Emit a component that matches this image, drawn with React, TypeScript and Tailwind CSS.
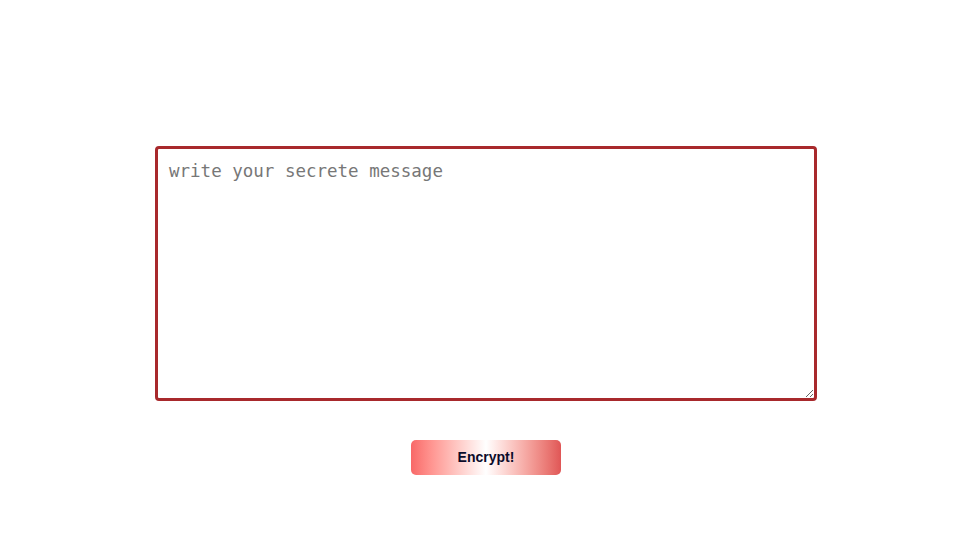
import React, { useState } from 'react';

const App: React.FC = () => {
  const [message, setMessage] = useState('');

  return (
    <div className="min-h-screen w-full bg-white flex flex-col items-center pt-[146px] pl-[19px]">
      {/* Message box */}
      <textarea
        value={message}
        onChange={(e) => setMessage(e.target.value)}
        placeholder="write your secrete message"
        className="w-[662px] h-[255px] border-[3px] border-[#a8292c] rounded-[4px] pl-[11px] pr-[10px] py-[10px] text-[17.5px] leading-[24px] text-gray-800 placeholder:text-[#777] outline-none resize font-['DejaVu_Sans_Mono','Liberation_Mono',monospace]"
      />

      {/* Action */}
      <button
        type="button"
        className="mt-[39px] w-[150px] h-[35px] rounded-[5px] bg-linear-to-r from-[#f86868] via-white to-[#e05656] text-[14px] font-bold text-[#0b0b2a] font-['Liberation_Sans',Arial,sans-serif]"
      >
        Encrypt!
      </button>
    </div>
  );
};

export default App;
